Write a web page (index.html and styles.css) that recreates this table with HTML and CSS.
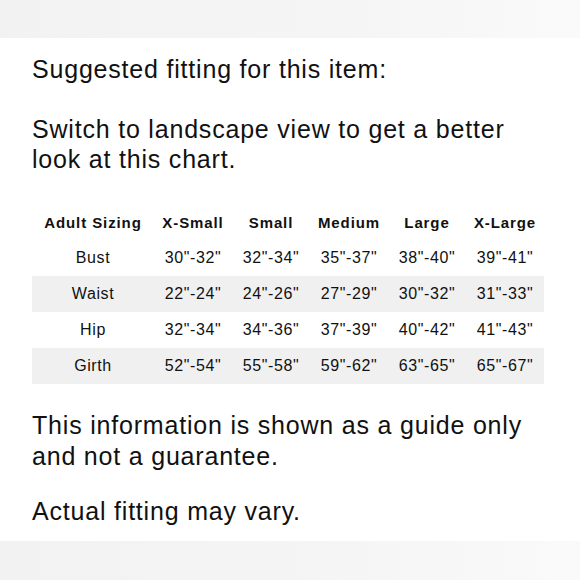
FILE: index.html
```html
<!DOCTYPE html>
<html>
<head>
<meta charset="utf-8">
<link rel="stylesheet" href="styles.css">
</head>
<body>
<div class="band band-top"></div>
<main class="card">
  <p class="lead">Suggested fitting for this item:</p>
  <p class="lead">Switch to landscape view to get a better look at this chart.</p>
  <div class="chart">
    <div class="row head">
      <span>Adult Sizing</span><span>X-Small</span><span>Small</span><span>Medium</span><span>Large</span><span>X-Large</span>
    </div>
    <div class="row">
      <span>Bust</span><span>30"-32"</span><span>32"-34"</span><span>35"-37"</span><span>38"-40"</span><span>39"-41"</span>
    </div>
    <div class="row shade">
      <span>Waist</span><span>22"-24"</span><span>24"-26"</span><span>27"-29"</span><span>30"-32"</span><span>31"-33"</span>
    </div>
    <div class="row">
      <span>Hip</span><span>32"-34"</span><span>34"-36"</span><span>37"-39"</span><span>40"-42"</span><span>41"-43"</span>
    </div>
    <div class="row shade">
      <span>Girth</span><span>52"-54"</span><span>55"-58"</span><span>59"-62"</span><span>63"-65"</span><span>65"-67"</span>
    </div>
  </div>
  <p class="lead note">This information is shown as a guide only and not a guarantee.</p>
  <p class="lead">Actual fitting may vary.</p>
</main>
<div class="band band-bottom"></div>
</body>
</html>
```
FILE: styles.css
```css
html, body {
  margin: 0;
  padding: 0;
  background: #ffffff;
}
body {
  width: 580px;
  height: 580px;
  overflow: hidden;
  display: flex;
  flex-direction: column;
  font-family: "Liberation Sans", Arial, sans-serif;
  color: #111111;
}
.band {
  flex: none;
  background: linear-gradient(90deg, #f2f2f2 0%, #f5f5f5 60%, #fafafa 100%);
}
.band-top {
  height: 38px;
}
.band-bottom {
  flex: 1;
}
.card {
  flex: none;
  height: 503px;
  box-sizing: border-box;
  padding: 16px 32px 0 32px;
  background: #ffffff;
}
.lead {
  margin: 0 0 30px 0;
  font-size: 25px;
  line-height: 30px;
  letter-spacing: 0.8px;
}
.chart {
  width: 512px;
  margin: 0 0 26px 0;
}
.row {
  display: grid;
  grid-template-columns: 122px repeat(5, 78px);
  height: 36px;
  align-items: center;
  font-size: 16px;
  letter-spacing: 0.6px;
}
.row span {
  text-align: center;
  white-space: nowrap;
}
.row.head {
  font-weight: bold;
  font-size: 15px;
  letter-spacing: 0.9px;
}
.row.shade {
  background: #f0f0f0;
}
.note {
  line-height: 31px;
  margin-bottom: 24px;
}
```
